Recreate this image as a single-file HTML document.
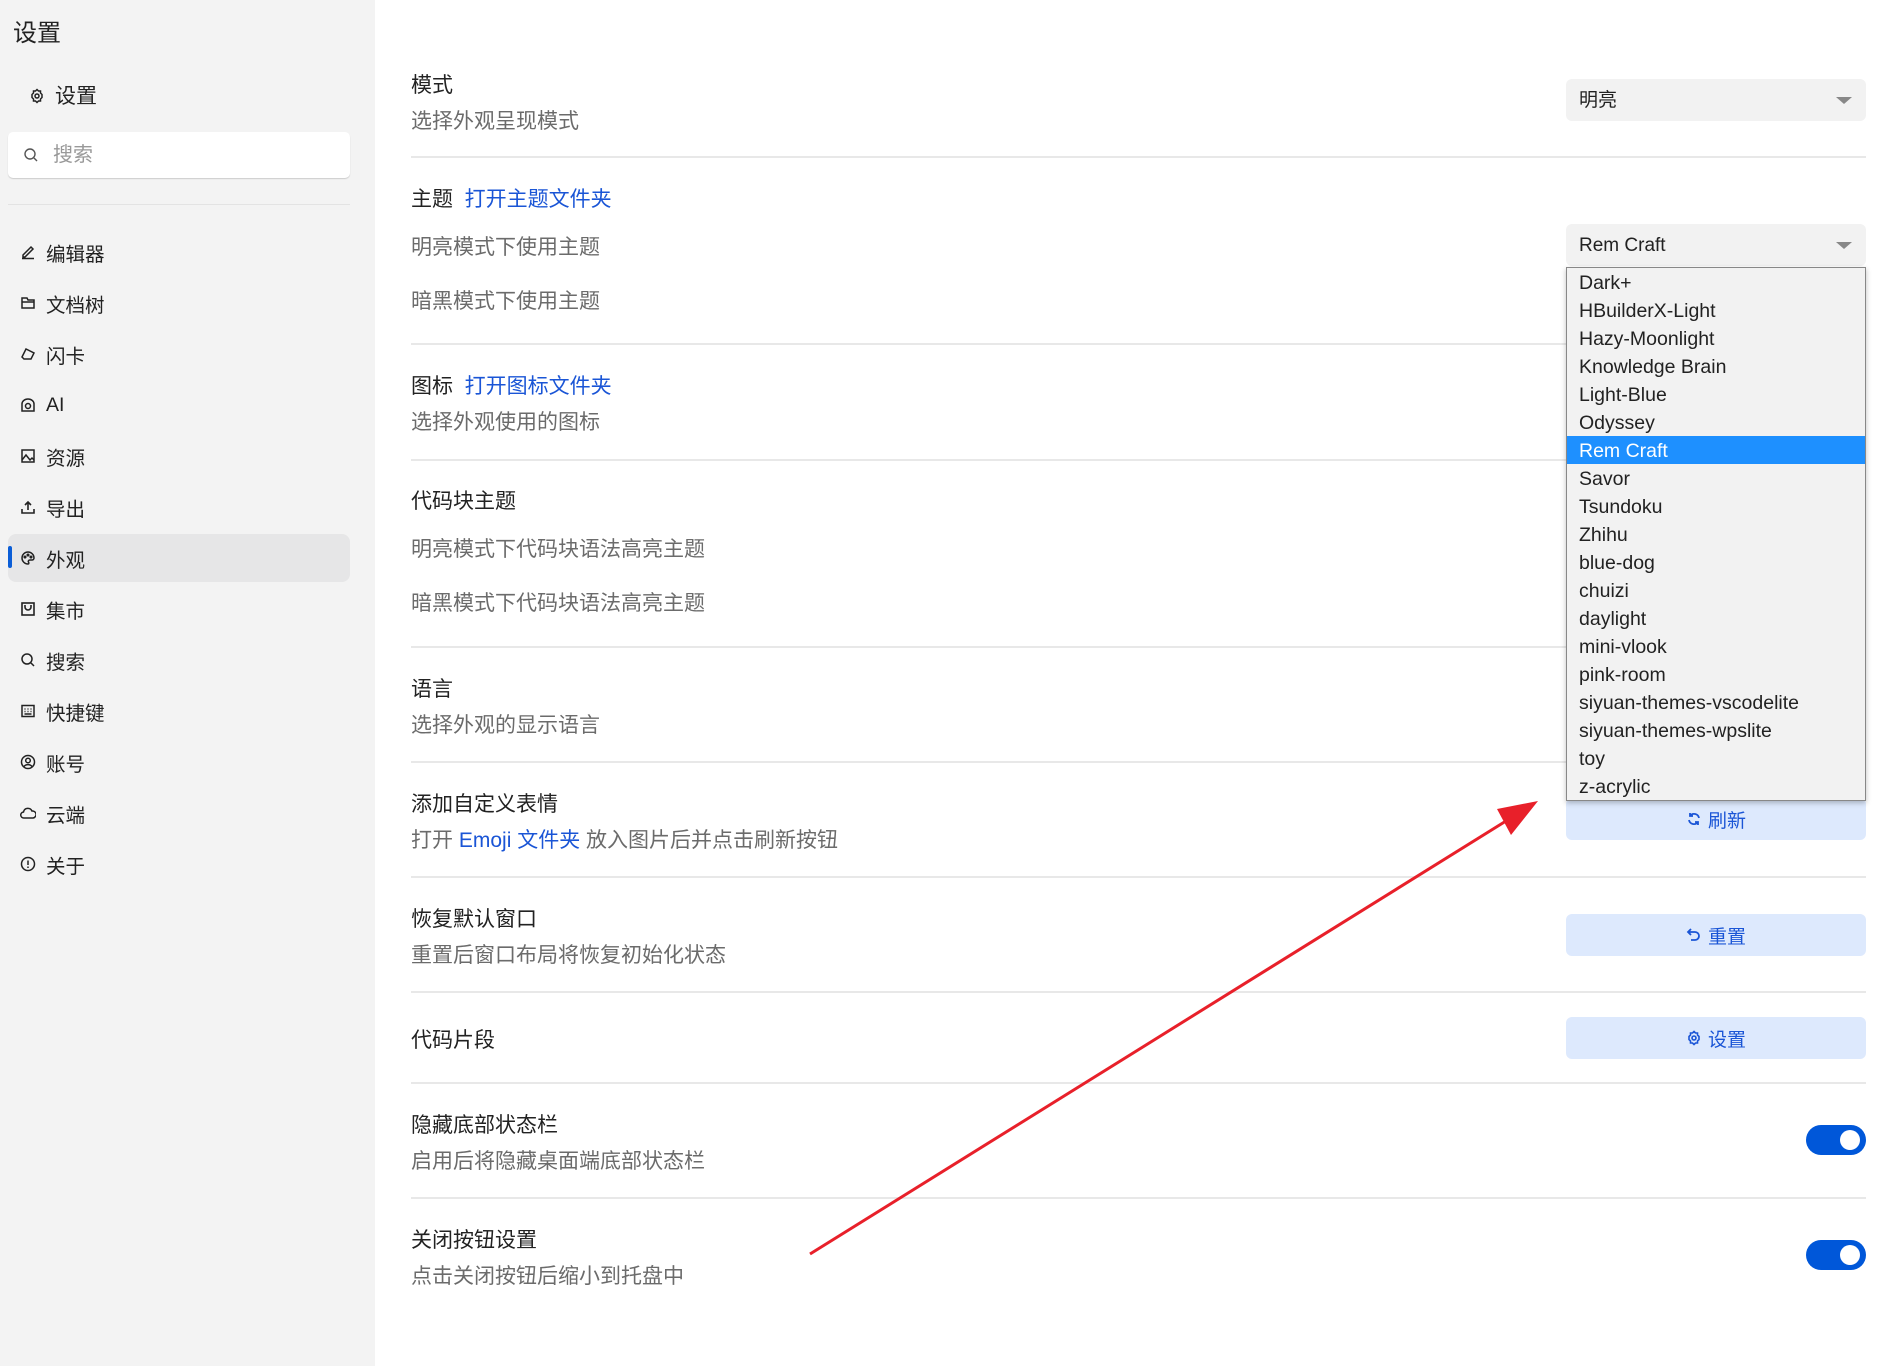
<!DOCTYPE html>
<html><head><meta charset="utf-8"><style>
*{box-sizing:border-box;margin:0;padding:0}
body{width:1880px;height:1366px;background:#fff;font-family:"Liberation Sans","Noto Sans CJK SC",sans-serif;position:relative;overflow:hidden;color:#222}
.sb{position:absolute;left:0;top:0;width:375px;height:1366px;background:#f3f3f3}
.a{position:absolute;white-space:nowrap;line-height:28px}
.nav{position:absolute;left:8px;width:342px;height:48px;display:flex;align-items:center;font-size:19.5px;color:#222}
.nav svg{position:absolute;left:12px}
.nav span{position:absolute;left:38px}
.t{font-size:21px;color:#222;left:411px}
.d{font-size:21px;color:#6b6b6b;left:411px}
.hr{position:absolute;left:411px;width:1455px;height:2px;background:#e8e8e8}
.sel{position:absolute;left:1566px;width:300px;height:42px;background:#f2f2f2;border-radius:6px;font-size:19px;padding-left:13px;line-height:44px}
.sel:after{content:"";position:absolute;right:14px;top:18px;border-left:8px solid transparent;border-right:8px solid transparent;border-top:7px solid #888}
.btn{position:absolute;left:1566px;width:300px;height:42px;background:#dde9fd;border-radius:6px;color:#1a55d6;font-size:19px;display:flex;align-items:center;justify-content:center;gap:6px}
.tg{position:absolute;left:1806px;width:60px;height:30px;border-radius:15px;background:#0057d9}
.tg:after{content:"";position:absolute;right:6px;top:5px;width:20px;height:20px;border-radius:50%;background:#fff}
.dd{position:absolute;left:1566px;top:267px;width:300px;height:534px;background:#f2f2f2;border:1px solid #888;box-shadow:0 2px 5px rgba(0,0,0,.25)}
.dd div{height:28px;line-height:31px;padding-left:12px;font-size:19.5px;color:#222}
.dd .s{background:#1e90ff;color:#fff}
a{color:#1a55d6;text-decoration:none}
</style></head><body>
<div class="sb">
<div class="a" style="left:13px;top:20px;font-size:24px;color:#222">设置</div>
<svg style="position:absolute;left:29px;top:88px" width="16" height="16" viewBox="0 0 16 16" fill="none" stroke="#222" stroke-width="1.5"><path d="M8 1.5l1.5 1.5h2v2L13 6.5v3l-1.5 1.5v2h-2L8 14.5 6.5 13h-2v-2L3 9.5v-3l1.5-1.5v-2h2z"/><circle cx="8" cy="8" r="2"/></svg>
<div class="a" style="left:55px;top:83px;font-size:21px">设置</div>
<div style="position:absolute;left:8px;top:132px;width:342px;height:46px;background:#fff;border-radius:5px;box-shadow:0 1px 1px #ccc"></div>
<svg style="position:absolute;left:23px;top:147px" width="16" height="16" viewBox="0 0 16 16" fill="none" stroke="#555" stroke-width="1.4"><circle cx="7" cy="7" r="5"/><path d="M11 11l3 3"/></svg>
<div class="a" style="left:53px;top:141px;font-size:20px;color:#999">搜索</div>
<div style="position:absolute;left:8px;top:204px;width:342px;height:1px;background:#e3e3e3"></div>

<div class="nav" style="top:228px"><svg width="16" height="16" viewBox="0 0 16 16" fill="none" stroke="#222" stroke-width="1.5"><path d="M3 11l8-8 2 2-8 8H3zM2 14.5h12"/></svg><span>编辑器</span></div>
<div class="nav" style="top:279px"><svg width="16" height="16" viewBox="0 0 16 16" fill="none" stroke="#222" stroke-width="1.5"><path d="M2 3h5l1 2h6v8H2zM2 7h12"/></svg><span>文档树</span></div>
<div class="nav" style="top:330px"><svg width="16" height="16" viewBox="0 0 16 16" fill="none" stroke="#222" stroke-width="1.5"><path d="M2 11l4-8 8 4-3 6H4z"/></svg><span>闪卡</span></div>
<div class="nav" style="top:381px"><svg width="16" height="16" viewBox="0 0 16 16" fill="none" stroke="#222" stroke-width="1.5"><path d="M2 14V7a6 5 0 0112 0v7z"/><circle cx="8" cy="9" r="2.5"/></svg><span>AI</span></div>
<div class="nav" style="top:432px"><svg width="16" height="16" viewBox="0 0 16 16" fill="none" stroke="#222" stroke-width="1.5"><rect x="2" y="2" width="12" height="12"/><path d="M2 12l4-5 4 5 2-2 2 2"/></svg><span>资源</span></div>
<div class="nav" style="top:483px"><svg width="16" height="16" viewBox="0 0 16 16" fill="none" stroke="#222" stroke-width="1.6"><path d="M2 10v4h12v-4M8 11V3M5 6l3-3 3 3"/></svg><span>导出</span></div>
<div class="nav" style="top:534px;background:#e6e6e7;border-radius:8px"><div style="position:absolute;left:0;top:12px;width:4px;height:22px;background:#0b5ed7;border-radius:2px"></div><svg width="16" height="16" viewBox="0 0 16 16" fill="none" stroke="#222" stroke-width="1.5"><path d="M8 2a6 6 0 100 12c1 0 1-1 .5-2s0-2 1.5-2h2a2 2 0 002-2 6 6 0 00-6-6z"/><circle cx="5" cy="7" r=".8"/><circle cx="8" cy="5" r=".8"/><circle cx="11" cy="7" r=".8"/></svg><span>外观</span></div>
<div class="nav" style="top:585px"><svg width="16" height="16" viewBox="0 0 16 16" fill="none" stroke="#222" stroke-width="1.6"><rect x="2" y="2" width="12" height="12"/><path d="M5 4v2a3 3 0 006 0V4"/></svg><span>集市</span></div>
<div class="nav" style="top:636px"><svg width="16" height="16" viewBox="0 0 16 16" fill="none" stroke="#222" stroke-width="1.5"><circle cx="7" cy="7" r="5"/><path d="M11 11l3 3"/></svg><span>搜索</span></div>
<div class="nav" style="top:687px"><svg width="16" height="16" viewBox="0 0 16 16" fill="none" stroke="#222" stroke-width="1.5"><rect x="2" y="2.5" width="12" height="11"/><path d="M4.5 6h1M7.5 6h1M10.5 6h1M4.5 8.5h1M7.5 8.5h1M10.5 8.5h1M4.5 11h7"/></svg><span>快捷键</span></div>
<div class="nav" style="top:738px"><svg width="16" height="16" viewBox="0 0 16 16" fill="none" stroke="#222" stroke-width="1.5"><circle cx="8" cy="8" r="6.5"/><circle cx="8" cy="6.5" r="2.3"/><path d="M4 12.5c2-2.5 6-2.5 8 0"/></svg><span>账号</span></div>
<div class="nav" style="top:789px"><svg width="16" height="16" viewBox="0 0 16 16" fill="none" stroke="#222" stroke-width="1.5"><path d="M4 13a3 3 0 01-.5-6A4.5 4.5 0 0112 6a3.5 3.5 0 011 7z"/></svg><span>云端</span></div>
<div class="nav" style="top:840px"><svg width="16" height="16" viewBox="0 0 16 16" fill="none" stroke="#222" stroke-width="1.5"><circle cx="8" cy="8" r="6.5"/><path d="M8 4.5v4.5M8 10.5v1.5"/></svg><span>关于</span></div>
</div>

<div class="a t" style="top:72px">模式</div>
<div class="a d" style="top:108px">选择外观呈现模式</div>
<div class="sel" style="top:79px">明亮</div>
<div class="hr" style="top:156px"></div>

<div class="a t" style="top:186px">主题 &nbsp;<a>打开主题文件夹</a></div>
<div class="a d" style="top:234px">明亮模式下使用主题</div>
<div class="a d" style="top:288px">暗黑模式下使用主题</div>
<div class="sel" style="top:224px">Rem Craft</div>
<div class="hr" style="top:343px"></div>

<div class="a t" style="top:373px">图标 &nbsp;<a>打开图标文件夹</a></div>
<div class="a d" style="top:409px">选择外观使用的图标</div>
<div class="hr" style="top:459px"></div>

<div class="a t" style="top:488px">代码块主题</div>
<div class="a d" style="top:536px">明亮模式下代码块语法高亮主题</div>
<div class="a d" style="top:590px">暗黑模式下代码块语法高亮主题</div>
<div class="hr" style="top:646px"></div>

<div class="a t" style="top:676px">语言</div>
<div class="a d" style="top:712px">选择外观的显示语言</div>
<div class="hr" style="top:761px"></div>

<div class="a t" style="top:791px">添加自定义表情</div>
<div class="a d" style="top:827px">打开 <a>Emoji 文件夹</a> 放入图片后并点击刷新按钮</div>
<div class="btn" style="top:798px"><svg width="16" height="16" viewBox="0 0 16 16" fill="none" stroke="#1a55d6" stroke-width="1.8"><path d="M13 7a5 5 0 00-9-2M3 9a5 5 0 009 2M4 2v3h3M12 14v-3H9"/></svg>刷新</div>
<div class="hr" style="top:876px"></div>

<div class="a t" style="top:906px">恢复默认窗口</div>
<div class="a d" style="top:942px">重置后窗口布局将恢复初始化状态</div>
<div class="btn" style="top:914px"><svg width="16" height="16" viewBox="0 0 16 16" fill="none" stroke="#1a55d6" stroke-width="1.8"><path d="M5 2L2 5l3 3M2 5h7a4 4 0 010 8H5"/></svg>重置</div>
<div class="hr" style="top:991px"></div>

<div class="a t" style="top:1027px">代码片段</div>
<div class="btn" style="top:1017px"><svg width="16" height="16" viewBox="0 0 16 16" fill="none" stroke="#1a55d6" stroke-width="1.6"><path d="M8 1.5l1.5 1.5h2v2L13 6.5v3l-1.5 1.5v2h-2L8 14.5 6.5 13h-2v-2L3 9.5v-3l1.5-1.5v-2h2z"/><circle cx="8" cy="8" r="2"/></svg>设置</div>
<div class="hr" style="top:1082px"></div>

<div class="a t" style="top:1112px">隐藏底部状态栏</div>
<div class="a d" style="top:1148px">启用后将隐藏桌面端底部状态栏</div>
<div class="tg" style="top:1125px"></div>
<div class="hr" style="top:1197px"></div>

<div class="a t" style="top:1227px">关闭按钮设置</div>
<div class="a d" style="top:1263px">点击关闭按钮后缩小到托盘中</div>
<div class="tg" style="top:1240px"></div>

<div class="dd">
<div>Dark+</div><div>HBuilderX-Light</div><div>Hazy-Moonlight</div><div>Knowledge Brain</div><div>Light-Blue</div><div>Odyssey</div><div class="s">Rem Craft</div><div>Savor</div><div>Tsundoku</div><div>Zhihu</div><div>blue-dog</div><div>chuizi</div><div>daylight</div><div>mini-vlook</div><div>pink-room</div><div>siyuan-themes-vscodelite</div><div>siyuan-themes-wpslite</div><div>toy</div><div>z-acrylic</div>
</div>

<svg style="position:absolute;left:0;top:0" width="1880" height="1366"><path d="M810 1254L1506 821" stroke="#e8202a" stroke-width="3"/><path d="M1538 801L1511 835L1504 822L1497 809Z" fill="#e8202a"/></svg>
</body></html>
